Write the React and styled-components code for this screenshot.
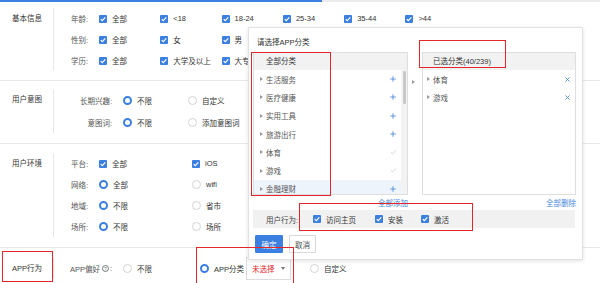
import React from "react";
import styled, { createGlobalStyle } from "styled-components";
import { Plus, Check, X } from "lucide-react";

const BLUE = "#3b7fe1";
const RED = "#e3262b";

const GlobalStyle = createGlobalStyle`
  html, body {
    margin: 0;
    padding: 0;
    background: #fff;
  }
  * {
    box-sizing: border-box;
  }
`;

const Page = styled.div`
  position: relative;
  width: 600px;
  height: 283px;
  overflow: hidden;
  background: #fff;
  font-family: "Liberation Sans", "Noto Sans CJK SC", sans-serif;
  font-size: 7.5px;
  color: #333;
`;

const TopBar = styled.div`
  display: flex;
  height: 2px;
  background: #ececec;
`;

const TopBarFill = styled.div`
  width: 322px;
  background: ${BLUE};
`;

const Section = styled.section`
  position: relative;
  display: flex;
  padding-top: ${(p) => p.$pt}px;
  padding-bottom: ${(p) => p.$pb}px;
  border-bottom: ${(p) => (p.$last ? "none" : "1px solid #e8e8e8")};
`;

const SectionTitle = styled.div`
  width: 53px;
  flex: none;
  padding-left: 12px;
  height: ${(p) => p.$h}px;
  line-height: ${(p) => p.$h}px;
  color: #333;
`;

const SectionBody = styled.div`
  flex: 1;
  padding-left: 10px;
  border-left: 1px solid #e6e6e6;
`;

const Row = styled.div`
  display: flex;
  align-items: center;
  height: ${(p) => p.$h}px;
`;

const FieldLabel = styled.div`
  width: ${(p) => p.$w}px;
  margin-right: 11px;
  text-align: right;
  color: #555;
  white-space: nowrap;
  display: flex;
  justify-content: flex-end;
  align-items: center;
  gap: 1px;
`;

const Option = styled.div`
  position: relative;
  display: flex;
  align-items: center;
  flex: none;
  width: ${(p) => p.$w}px;
  white-space: nowrap;
`;

const OptionText = styled.span`
  margin-left: 5px;
  color: #333;
`;

const Box = styled.span`
  display: inline-flex;
  align-items: center;
  justify-content: center;
  width: 8px;
  height: 8px;
  flex: none;
  border-radius: 1px;
  background: ${BLUE};
`;

const Radio = styled.span`
  width: 9px;
  height: 9px;
  flex: none;
  border-radius: 50%;
  background: #fff;
  border: ${(p) => (p.$on ? `2.5px solid ${BLUE}` : "1px solid #d4d4d4")};
`;

const HelpIcon = styled.span`
  display: inline-flex;
  align-items: center;
  justify-content: center;
  width: 7px;
  height: 7px;
  border: 0.8px solid #777;
  border-radius: 50%;
  font-size: 5px;
  color: #777;
  margin-left: 1px;
`;

const Select = styled.div`
  display: flex;
  align-items: center;
  gap: 6px;
  height: 23px;
  margin-left: 2px;
  padding: 0 5px;
  border: 1px solid #dcdcdc;
  color: ${RED};
`;

const Caret = styled.span`
  width: 0;
  height: 0;
  border-left: 2.5px solid transparent;
  border-right: 2.5px solid transparent;
  border-top: 3px solid #777;
`;

const Mark = styled.div`
  position: absolute;
  left: ${(p) => p.$x}px;
  top: ${(p) => p.$y}px;
  width: ${(p) => p.$w}px;
  height: ${(p) => p.$h}px;
  border: 1.5px solid ${RED};
  pointer-events: none;
  z-index: 5;
`;

/* popup */

const Popup = styled.div`
  position: absolute;
  left: 248px;
  top: 27px;
  width: 335px;
  padding: 0 0 6px 4px;
  background: #fff;
  border: 1px solid #e2e2e2;
  box-shadow: 0 1px 4px rgba(0, 0, 0, 0.12);
  z-index: 3;
`;

const PopupTitle = styled.div`
  height: 24px;
  padding: 6px 0 0 4px;
  line-height: 18px;
  color: #333;
`;

const Lists = styled.div`
  display: flex;
  height: 143px;
`;

const ListBox = styled.div`
  position: relative;
  display: flex;
  flex-direction: column;
  width: ${(p) => p.$w}px;
  border: 1px solid #dedede;
  overflow: visible;
`;

const ListHead = styled.div`
  height: 17px;
  line-height: 17px;
  padding-left: ${(p) => p.$pl}px;
  background: #f2f2f2;
  color: #333;
  flex: none;
`;

const ListScroll = styled.div`
  display: flex;
  flex: 1;
  overflow: hidden;
`;

const Items = styled.div`
  flex: 1;
`;

const Item = styled.div`
  display: flex;
  align-items: center;
  height: 18.3px;
  padding: 0 4px 0 ${(p) => p.$pl}px;
  background: ${(p) => (p.$active ? "#eef4fc" : "transparent")};
  color: #555;
`;

const Tri = styled.span`
  width: 0;
  height: 0;
  margin-right: 3px;
  border-top: 2px solid transparent;
  border-bottom: 2px solid transparent;
  border-left: 3px solid #9a9a9a;
`;

const ItemText = styled.span`
  flex: 1;
`;

const ScrollTrack = styled.div`
  width: 6px;
  padding: 1px 1px 0 2px;
  background: #f3f3f3;
`;

const ScrollThumb = styled.div`
  height: 33px;
  border-radius: 1px;
  background: #c9c9c9;
`;

const Middle = styled.div`
  width: 14px;
  display: flex;
  justify-content: center;
  padding-top: 28px;
`;

const Links = styled.div`
  display: flex;
  height: 15px;
  align-items: center;
`;

const Link = styled.div`
  width: ${(p) => p.$w}px;
  margin-right: ${(p) => p.$mr || 0}px;
  text-align: right;
  color: #4a88da;
`;

const Behavior = styled.div`
  position: relative;
  display: flex;
  align-items: center;
  width: 322px;
  height: 18px;
  padding-left: 13px;
  background: #f1f1f1;
`;

const BehaviorLabel = styled.span`
  width: 47px;
  color: #444;
`;

const Buttons = styled.div`
  display: flex;
  gap: 6px;
  margin: 7px 0 0 2px;
`;

const Button = styled.button`
  height: 18px;
  width: ${(p) => p.$w}px;
  padding: 0;
  font: inherit;
  border-radius: 1px;
  border: 1px solid ${(p) => (p.$primary ? BLUE : "#d8d8d8")};
  background: ${(p) => (p.$primary ? BLUE : "#fff")};
  color: ${(p) => (p.$primary ? "#fff" : "#444")};
`;

const CheckBox = () => (
  <Box>
    <svg width="8" height="8" viewBox="0 0 8 8">
      <path d="M1.7 4.1 L3.3 5.6 L6.3 2.4" stroke="#fff" strokeWidth="1.2" fill="none" />
    </svg>
  </Box>
);

const Opt = ({ w, kind, on, text, children }) => (
  <Option $w={w}>
    {kind === "check" ? <CheckBox /> : <Radio $on={on} />}
    <OptionText>{text}</OptionText>
    {children}
  </Option>
);

const cats = [
  { name: "生活服务", add: true },
  { name: "医疗健康", add: true },
  { name: "实用工具", add: true },
  { name: "旅游出行", add: true },
  { name: "体育", add: false },
  { name: "游戏", add: false },
  { name: "金融理财", add: true, active: true },
];

const picked = ["体育", "游戏"];

export default function App() {
  return (
    <Page>
      <GlobalStyle />
      <TopBar>
        <TopBarFill />
      </TopBar>

      <Section $pt={6} $pb={9}>
        <SectionTitle $h={21}>基本信息</SectionTitle>
        <SectionBody>
          <Row $h={21}>
            <FieldLabel $w={24}>年龄:</FieldLabel>
            {["全部", "<18", "18-24", "25-34", "35-44", ">44"].map((t) => (
              <Opt key={t} w={61.3} kind="check" text={t} />
            ))}
          </Row>
          <Row $h={21}>
            <FieldLabel $w={24}>性别:</FieldLabel>
            {["全部", "女", "男"].map((t) => (
              <Opt key={t} w={61.3} kind="check" text={t} />
            ))}
          </Row>
          <Row $h={21}>
            <FieldLabel $w={24}>学历:</FieldLabel>
            {["全部", "大学及以上", "大专"].map((t) => (
              <Opt key={t} w={61.3} kind="check" text={t} />
            ))}
          </Row>
        </SectionBody>
      </Section>

      <Section $pt={8} $pb={10}>
        <SectionTitle $h={22}>用户意图</SectionTitle>
        <SectionBody>
          <Row $h={22}>
            <FieldLabel $w={48}>长期兴趣:</FieldLabel>
            <Opt w={65} kind="radio" on text="不限" />
            <Opt w={65} kind="radio" text="自定义" />
          </Row>
          <Row $h={22}>
            <FieldLabel $w={48}>意图词:</FieldLabel>
            <Opt w={65} kind="radio" on text="不限" />
            <Opt w={65} kind="radio" text="添加意图词" />
          </Row>
        </SectionBody>
      </Section>

      <Section $pt={9} $pb={10}>
        <SectionTitle $h={21}>用户环境</SectionTitle>
        <SectionBody>
          <Row $h={21}>
            <FieldLabel $w={24}>平台:</FieldLabel>
            <Opt w={93} kind="check" text="全部" />
            <Opt w={93} kind="check" text="iOS" />
          </Row>
          <Row $h={21}>
            <FieldLabel $w={24}>网络:</FieldLabel>
            <Opt w={93} kind="radio" on text="全部" />
            <Opt w={93} kind="radio" text="wifi" />
          </Row>
          <Row $h={21}>
            <FieldLabel $w={24}>地域:</FieldLabel>
            <Opt w={93} kind="radio" on text="不限" />
            <Opt w={93} kind="radio" text="省市" />
          </Row>
          <Row $h={21}>
            <FieldLabel $w={24}>场所:</FieldLabel>
            <Opt w={93} kind="radio" on text="不限" />
            <Opt w={93} kind="radio" text="场所" />
          </Row>
        </SectionBody>
      </Section>

      <Section $pt={10} $pb={4} $last>
        <SectionTitle $h={21}>APP行为</SectionTitle>
        <Mark $x={2} $y={3} $w={51} $h={31} />
        <SectionBody>
          <Row $h={21}>
            <FieldLabel $w={48}>
              APP偏好<HelpIcon>?</HelpIcon>:
            </FieldLabel>
            <Opt w={77} kind="radio" text="不限" />
            <Opt w={110} kind="radio" on text="APP分类">
              <Select>
                未选择
                <Caret />
              </Select>
              <Mark $x={-4} $y={-10} $w={98} $h={40} />
            </Opt>
            <Opt w={80} kind="radio" text="自定义" />
          </Row>
        </SectionBody>
      </Section>

      <Popup>
        <PopupTitle>请选择APP分类</PopupTitle>
        <Lists>
          <ListBox $w={155}>
            <ListHead $pl={12}>全部分类</ListHead>
            <ListScroll>
              <Items>
                {cats.map((c) => (
                  <Item key={c.name} $pl={6} $active={c.active}>
                    <Tri />
                    <ItemText>{c.name}</ItemText>
                    {c.add ? (
                      <Plus size={8} color="#4a88da" strokeWidth={2.6} />
                    ) : (
                      <Check size={7} color="#bdbdbd" strokeWidth={2} />
                    )}
                  </Item>
                ))}
              </Items>
              <ScrollTrack>
                <ScrollThumb />
              </ScrollTrack>
            </ListScroll>
            <Mark $x={-3} $y={-1} $w={80} $h={144} />
          </ListBox>
          <Middle>
            <Tri />
          </Middle>
          <ListBox $w={154}>
            <ListHead $pl={10}>已选分类(40/239)</ListHead>
            {picked.map((p) => (
              <Item key={p} $pl={4}>
                <Tri />
                <ItemText>{p}</ItemText>
                <X size={7} color="#4a88da" strokeWidth={3} />
              </Item>
            ))}
            <Mark $x={-4} $y={-13} $w={87} $h={28} />
          </ListBox>
        </Lists>
        <Links>
          <Link $w={155} $mr={14}>全部添加</Link>
          <Link $w={154}>全部删除</Link>
        </Links>
        <Behavior>
          <BehaviorLabel>用户行为:</BehaviorLabel>
          <Opt w={62} kind="check" text="访问主页" />
          <Opt w={46} kind="check" text="安装" />
          <Opt w={46} kind="check" text="激活" />
          <Mark $x={46} $y={-7} $w={174} $h={28} />
        </Behavior>
        <Buttons>
          <Button $primary $w={28}>确定</Button>
          <Button $w={27}>取消</Button>
        </Buttons>
      </Popup>
    </Page>
  );
}
